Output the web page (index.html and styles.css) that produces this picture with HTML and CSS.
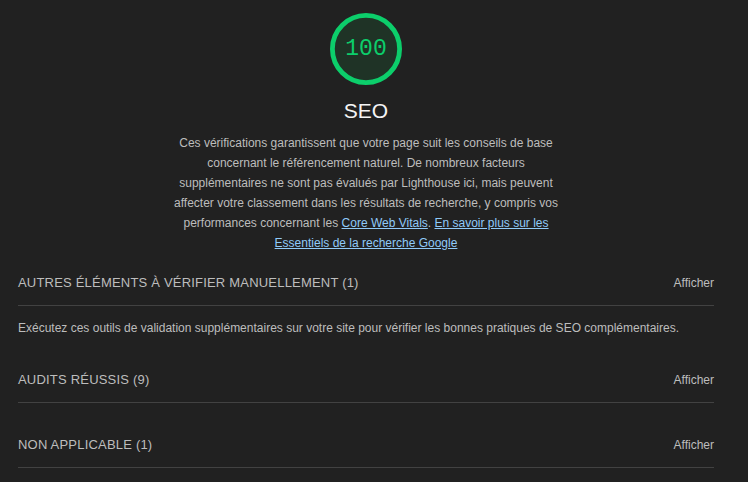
FILE: index.html
```html
<!DOCTYPE html>
<html lang="fr">
<head>
<meta charset="utf-8">
<title>SEO</title>
<link rel="stylesheet" href="styles.css">
</head>
<body>
<main class="category">
  <header class="cat-header">
    <div class="gauge">
      <svg class="gauge-svg" viewBox="0 0 120 120" width="72" height="72" aria-hidden="true">
        <circle cx="60" cy="60" r="56" fill="#1f3326" stroke="#0cce6b" stroke-width="8"/>
      </svg>
      <span class="gauge-value">100</span>
    </div>
    <h1 class="cat-title">SEO</h1>
    <p class="cat-desc">Ces vérifications garantissent que votre page suit les conseils de base concernant le référencement naturel. De nombreux facteurs supplémentaires ne sont pas évalués par Lighthouse ici, mais peuvent affecter votre classement dans les résultats de recherche, y compris vos performances concernant les <a href="#">Core Web Vitals</a>. <a href="#">En savoir plus sur les Essentiels de la recherche Google</a></p>
  </header>

  <section class="group">
    <div class="group-head">
      <span class="group-title">Autres éléments à vérifier manuellement (1)</span>
      <span class="group-toggle">Afficher</span>
    </div>
    <p class="group-desc">Exécutez ces outils de validation supplémentaires sur votre site pour vérifier les bonnes pratiques de SEO complémentaires.</p>
  </section>

  <section class="group">
    <div class="group-head">
      <span class="group-title">Audits réussis (9)</span>
      <span class="group-toggle">Afficher</span>
    </div>
  </section>

  <section class="group">
    <div class="group-head">
      <span class="group-title">Non applicable (1)</span>
      <span class="group-toggle">Afficher</span>
    </div>
  </section>
</main>
</body>
</html>
```

FILE: styles.css
```css
html, body {
  margin: 0;
  padding: 0;
  background: #212121;
}

body {
  font-family: "Liberation Sans", Arial, sans-serif;
  color: #bdbdbd;
}

.category {
  padding: 13px 34px 0 18px;
}

.cat-header {
  display: flex;
  flex-direction: column;
  align-items: center;
}

.gauge {
  position: relative;
  width: 72px;
  height: 72px;
}

.gauge-svg {
  display: block;
}

.gauge-value {
  position: absolute;
  inset: 0;
  display: flex;
  align-items: center;
  justify-content: center;
  font-family: "Liberation Mono", "DejaVu Sans Mono", monospace;
  font-size: 23px;
  color: #0cce6b;
}

.cat-title {
  margin: 14px 0 0;
  font-size: 21px;
  line-height: 24px;
  font-weight: 400;
  color: #f5f5f5;
}

.cat-desc {
  margin: 10px 0 0;
  max-width: 400px;
  font-size: 12px;
  line-height: 20px;
  text-align: center;
  color: #bdbdbd;
}

.cat-desc a {
  color: #90caf9;
  text-decoration: underline;
}

.group {
  margin-top: 7px;
}

.group + .group {
  margin-top: 19px;
}

.group-head {
  display: flex;
  justify-content: space-between;
  align-items: center;
  height: 45px;
  border-bottom: 1px solid #424242;
}

.group-title {
  font-size: 13px;
  letter-spacing: 0.2px;
  text-transform: uppercase;
  color: #bdbdbd;
}

.group-toggle {
  font-size: 12px;
  color: #bdbdbd;
}

.group-desc {
  margin: 12px 0 0;
  font-size: 12px;
  line-height: 20px;
  color: #bdbdbd;
}
```
